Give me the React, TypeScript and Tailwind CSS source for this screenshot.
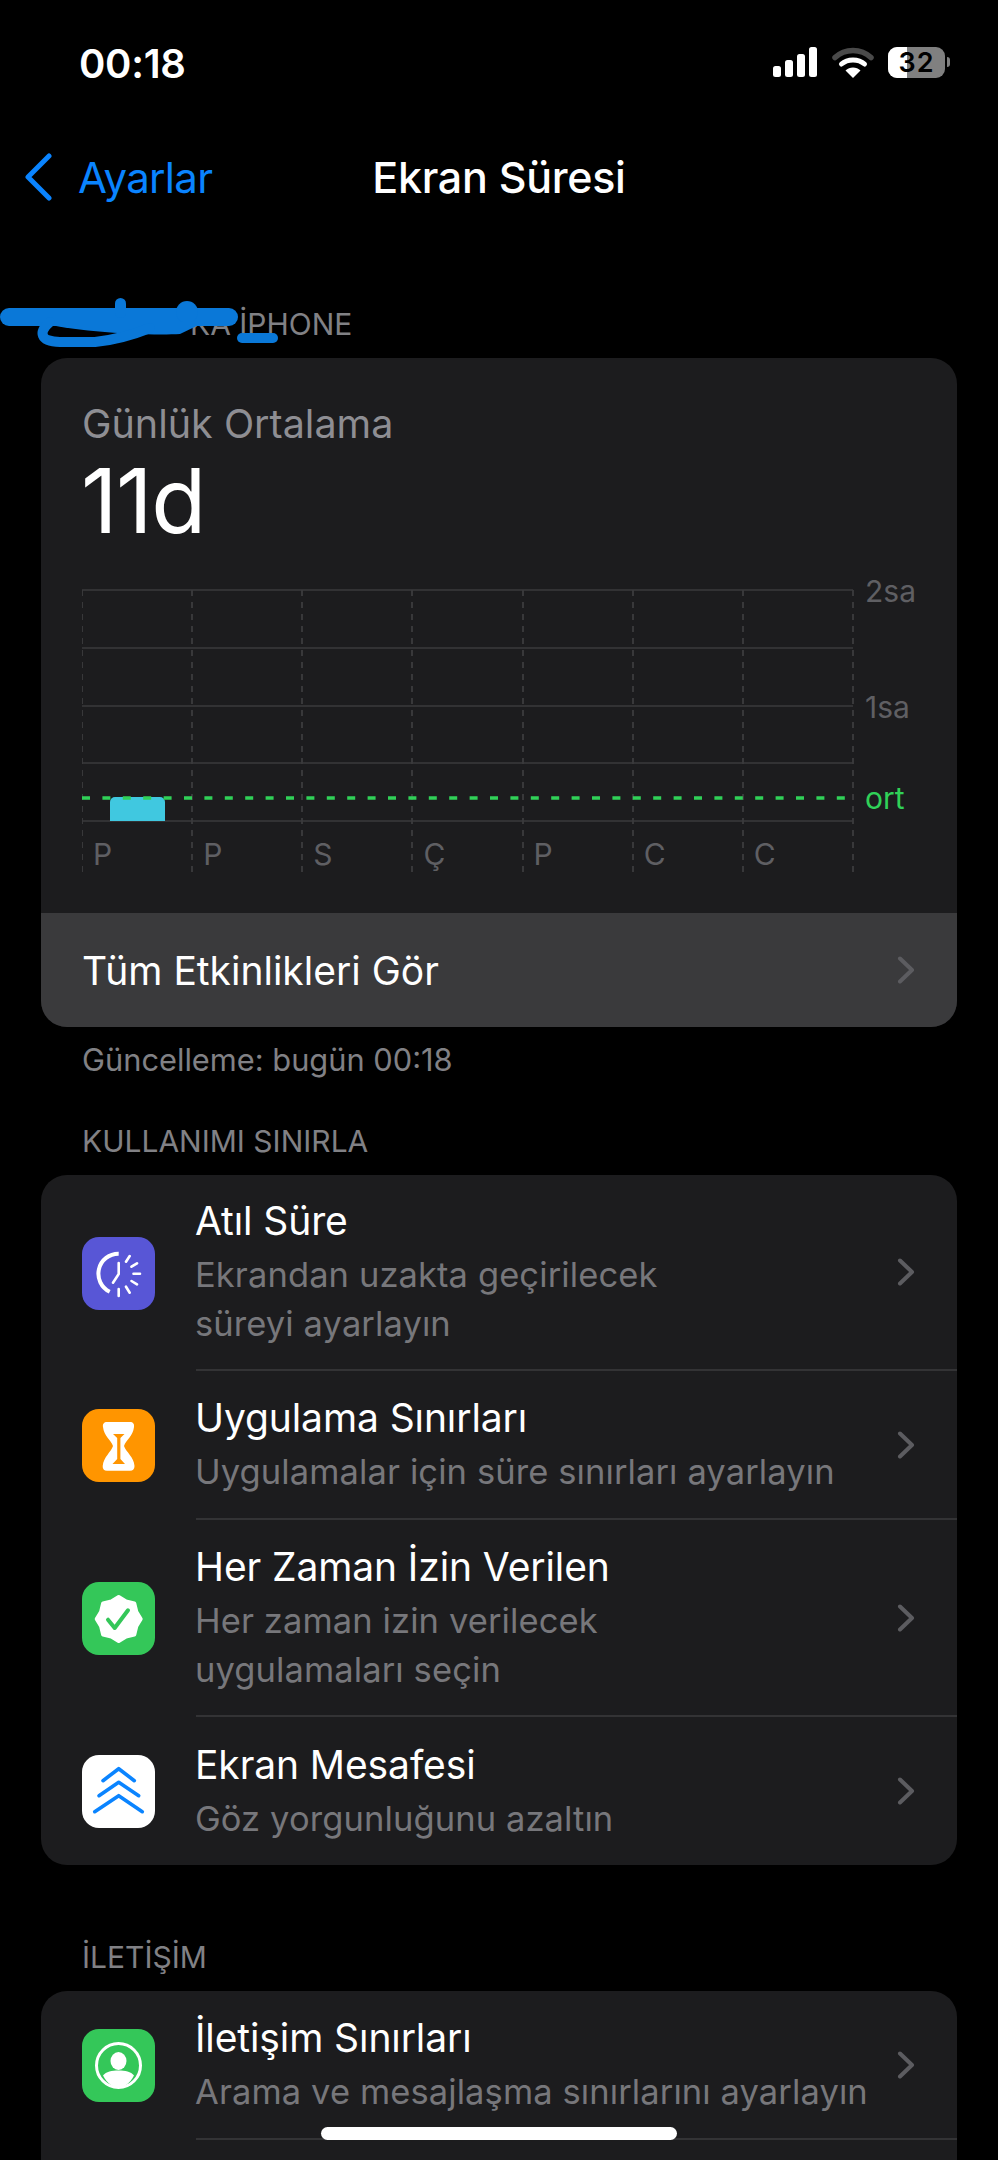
import React from "react";

const Chevron = () => (
  <svg width="18" height="28" viewBox="0 0 18 28" fill="none" className="shrink-0 -ml-[3px]">
    <path d="M3 2.5 L15 14 L3 25.5" stroke="#5c5c60" strokeWidth="4" strokeLinecap="round" strokeLinejoin="round" />
  </svg>
);

const IconBox = ({ bg, children }: { bg: string; children: React.ReactNode }) => (
  <div className={`w-[73px] h-[73px] rounded-[17px] shrink-0 ${bg}`}>
    <svg width="73" height="73" viewBox="0 0 73 73" fill="none">
      {children}
    </svg>
  </div>
);

const sealPoints = Array.from({ length: 16 }, (_, i) => {
  const a = (i * Math.PI) / 8 - Math.PI / 2;
  const r = i % 2 === 0 ? 22 : 19;
  return `${(36.7 + r * Math.cos(a)).toFixed(1)},${(37 + r * Math.sin(a)).toFixed(1)}`;
}).join(" ");

const DowntimeIcon = () => (
  <IconBox bg="bg-[#5856d6]">
    <g stroke="#fff" strokeLinecap="round">
      <path d="M36.7 16.7 A20 20 0 0 0 27.7 54.7" strokeWidth="4" strokeLinecap="butt" />
      <path d="M36.7 26 L36.7 37 L31 45.7" strokeWidth="2.6" strokeLinejoin="round" />
      <path d="M47.7 19 L44 24.7 M55 26.3 L49.5 29.7 M58 36.7 L51.5 36.7 M55 47.3 L49.5 44 M47.7 55.7 L44 49.7 M36.7 59 L36.7 52" strokeWidth="2.6" />
    </g>
  </IconBox>
);

const LimitsIcon = () => (
  <IconBox bg="bg-[#ff9500]">
    <path
      d="M25 13 H48 C51 13 52.5 15 52 18 C51 27 44 31 42 37 C44 43 52 48 52.5 57 C52.5 60 51 61.7 48 61.7 H25 C22 61.7 20.5 60 20.7 57 C21.5 48 29 43 31 37 C29 31 22 27 21 18 C20.5 15 22 13 25 13 Z"
      fill="#fff"
    />
    <path d="M31 25 H42.5 L38.4 29 V50 L43 55 H30.5 L35.2 50 V29 Z" fill="#ff9500" />
  </IconBox>
);

const AllowedIcon = () => (
  <IconBox bg="bg-[#34c759]">
    <polygon points={sealPoints} fill="#fff" stroke="#fff" strokeWidth="4" strokeLinejoin="round" />
    <path d="M26 37.7 L32.7 46 L46 28.3" stroke="#34c759" strokeWidth="4" strokeLinecap="round" strokeLinejoin="round" />
  </IconBox>
);

const DistanceIcon = () => (
  <IconBox bg="bg-white">
    <g stroke="#0a84ff" strokeWidth="3.6" strokeLinecap="round" strokeLinejoin="round">
      <path d="M12.7 56.7 L36.7 40.7 L60.3 56.7" />
      <path d="M17 40.7 L36.7 27.3 L56.7 40.7" />
      <path d="M21 25.7 L36.7 13.7 L52.3 25.7" />
    </g>
  </IconBox>
);

const ContactIcon = () => (
  <IconBox bg="bg-[#34c759]">
    <circle cx="36.5" cy="36.5" r="22" stroke="#fff" strokeWidth="3" />
    <ellipse cx="36.5" cy="32" rx="8" ry="9" fill="#fff" />
    <path d="M21 46.5 C24 42.5 30 41.5 36.5 41.5 C43 41.5 49 42.5 52 46.5 C48 54.5 42 58.5 36.5 58.5 C31 58.5 25 54.5 21 46.5 Z" fill="#fff" />
  </IconBox>
);

const Row = ({
  icon,
  title,
  lines,
  height,
  divider,
}: {
  icon: React.ReactNode;
  title: string;
  lines: string[];
  height: string;
  divider?: boolean;
}) => (
  <div className={`flex items-center pl-[41px] ${height}`}>
    {icon}
    <div className={`flex-1 h-full ml-[41px] flex items-center pr-[42px] ${divider ? "border-b-2 border-[#333335]" : ""}`}>
      <div className="flex-1 -ml-[1px]">
        <div className="text-[39px] leading-[50px] text-white tracking-[-0.1px]">{title}</div>
        <div className="mt-[4px] text-[34.5px] leading-[49px] text-[#77777b] tracking-[0.1px]">
          {lines.map((l) => (
            <div key={l}>{l}</div>
          ))}
        </div>
      </div>
      <Chevron />
    </div>
  </div>
);

const SectionLabel = ({ children, className }: { children: React.ReactNode; className: string }) => (
  <div className={`h-[36px] leading-[36px] text-[30px] text-[#818185] ${className}`}>{children}</div>
);

const days = ["P", "P", "S", "Ç", "P", "C", "C"];
const chartColumns = [82, 192, 302, 412, 523, 633, 743, 853];
const chartRows = [590, 648, 706, 763, 821];

const Chart = () => (
  <div className="relative ml-[41px] h-[284px] w-[850px]">
    <svg width="772" height="284" viewBox="82 589 772 284" fill="none" className="block">
      {chartColumns.map((x) => (
        <line key={x} x1={x} x2={x} y1="590" y2="873" stroke="#4b4b4e" strokeWidth="1.2" strokeDasharray="6 6" />
      ))}
      {chartRows.map((y) => (
        <line key={y} x1="82" x2="853" y1={y} y2={y} stroke="#3a3a3c" strokeWidth="1.6" />
      ))}
      <path d="M110 821 V802 A5 5 0 0 1 115 797 H160 A5 5 0 0 1 165 802 V821 Z" fill="#40c8e0" />
      <line x1="82" x2="848" y1="798" y2="798" stroke="#30d158" strokeWidth="3.6" strokeDasharray="8 12.4" />
    </svg>
    <div className="absolute left-0 top-[247px] w-[771px] grid grid-cols-7">
      {days.map((d, i) => (
        <div key={i} className="pl-[11px] text-[30px] leading-[36px] text-[#5f5f63]">
          {d}
        </div>
      ))}
    </div>
    <div className="absolute left-[783px] top-[-18px] text-[30px] leading-[40px] text-[#5f5f63]">2sa</div>
    <div className="absolute left-[783px] top-[98px] text-[30px] leading-[40px] text-[#5f5f63]">1sa</div>
    <div className="absolute left-[783px] top-[189px] text-[30px] leading-[40px] text-[#30d158]">ort</div>
  </div>
);

export default function App() {
  return (
    <div className="relative h-[2160px] w-[998px] overflow-hidden bg-black font-['Inter',sans-serif]">
      {/* status bar */}
      <div className="h-[124px] flex items-center justify-between pl-[79px] pr-[48px]">
        <span className="pt-[4px] text-[40px] font-semibold text-white tracking-[-0.3px]">00:18</span>
        <div className="flex items-center">
          <svg width="44" height="30" viewBox="0 0 44 30" fill="#fff">
            <rect x="0" y="19" width="8" height="11" rx="2.5" />
            <rect x="12" y="13" width="8" height="17" rx="2.5" />
            <rect x="24" y="7" width="8" height="23" rx="2.5" />
            <rect x="36" y="0" width="8" height="30" rx="2.5" />
          </svg>
          <svg width="42" height="31" viewBox="0 0 42 31" fill="none" className="ml-[15px]">
            <path d="M3 10.5 C13 1 29 1 39 10.5" stroke="#4a4a4a" strokeWidth="5.5" strokeLinecap="round" />
            <path d="M9.5 17 C15.5 11.5 26.5 11.5 32.5 17" stroke="#fff" strokeWidth="5" strokeLinecap="round" />
            <path d="M21 31 L13.5 23.5 C17.5 19.5 24.5 19.5 28.5 23.5 Z" fill="#fff" />
          </svg>
          <div className="relative ml-[14px] w-[57px] h-[31px] rounded-[9px] bg-[#808080]">
            <div className="h-full w-[19px] rounded-l-[9px] bg-white" />
            <div className="absolute inset-0 flex items-center justify-center text-[27px] leading-[31px] font-semibold text-black tracking-[1px]">
              32
            </div>
          </div>
          <div className="ml-[2px] w-[3px] h-[10px] rounded-r-full bg-[#808080]" />
        </div>
      </div>

      {/* nav bar */}
      <div className="relative h-[106px] flex items-center pl-[24px]">
        <svg width="28" height="48" viewBox="0 0 28 48" fill="none">
          <path d="M25 3 L4 24 L25 45" stroke="#0a84ff" strokeWidth="5" strokeLinecap="round" strokeLinejoin="round" />
        </svg>
        <span className="ml-[26px] text-[42px] text-[#0a84ff] tracking-[-0.7px]">Ayarlar</span>
        <span className="absolute left-0 right-0 text-center text-[43px] font-medium text-white tracking-[-0.3px]">
          Ekran Süresi
        </span>
      </div>

      <SectionLabel className="mt-[76px] pl-[190px]">KA İPHONE</SectionLabel>

      {/* scribble over the device name */}
      <svg width="290" height="60" viewBox="0 295 290 60" fill="#0a78d8" className="absolute left-0 top-[295px]">
        <rect x="0" y="308" width="238" height="18" rx="9" />
        <rect x="115" y="298" width="11" height="20" rx="5.5" />
        <circle cx="187" cy="312" r="11" />
        <path d="M40 322 C70 332 150 336 180 334 L205 322 Z" />
        <path d="M50 322 C38 332 40 342 60 342 L95 342 C115 340 130 336 150 328" fill="none" stroke="#0a78d8" strokeWidth="10" strokeLinecap="round" />
        <rect x="237" y="333" width="41" height="10" rx="5" />
      </svg>

      {/* daily average card */}
      <div className="mt-[16px] mx-[41px] rounded-[26px] bg-[#1c1c1e] overflow-hidden">
        <div className="h-[555px] pt-[44px]">
          <div className="pl-[41px] text-[39.5px] leading-[44px] text-[#8e8e93]">Günlük Ortalama</div>
          <div className="pl-[40px] mt-[9px] text-[90px] leading-[92px] text-white tracking-[-1.5px]">11d</div>
          <div className="mt-[42px]">
            <Chart />
          </div>
        </div>
        <div className="h-[114px] bg-[#3a3a3c] flex items-center justify-between pl-[41px] pr-[42px]">
          <span className="pt-[2px] text-[39px] text-white">Tüm Etkinlikleri Gör</span>
          <Chevron />
        </div>
      </div>

      <div className="mt-[15px] pl-[82px] h-[36px] leading-[36px] text-[30.8px] text-[#818185]">
        Güncelleme: bugün 00:18
      </div>

      <SectionLabel className="mt-[45px] pl-[82px]">KULLANIMI SINIRLA</SectionLabel>

      {/* limit usage card */}
      <div className="mt-[16px] mx-[41px] rounded-[26px] bg-[#1c1c1e] overflow-hidden">
        <Row icon={<DowntimeIcon />} title="Atıl Süre" lines={["Ekrandan uzakta geçirilecek", "süreyi ayarlayın"]} height="h-[196px]" divider />
        <Row icon={<LimitsIcon />} title="Uygulama Sınırları" lines={["Uygulamalar için süre sınırları ayarlayın"]} height="h-[149px]" divider />
        <Row icon={<AllowedIcon />} title="Her Zaman İzin Verilen" lines={["Her zaman izin verilecek", "uygulamaları seçin"]} height="h-[197px]" divider />
        <Row icon={<DistanceIcon />} title="Ekran Mesafesi" lines={["Göz yorgunluğunu azaltın"]} height="h-[148px]" />
      </div>

      <SectionLabel className="mt-[74px] pl-[82px]">İLETİŞİM</SectionLabel>

      {/* communication card */}
      <div className="mt-[16px] mx-[41px] rounded-t-[26px] bg-[#1c1c1e] h-[300px]">
        <Row icon={<ContactIcon />} title="İletişim Sınırları" lines={["Arama ve mesajlaşma sınırlarını ayarlayın"]} height="h-[149px]" divider />
      </div>

      {/* home indicator */}
      <div className="absolute left-[321px] top-[2127px] w-[356px] h-[13px] rounded-full bg-white" />
    </div>
  );
}
